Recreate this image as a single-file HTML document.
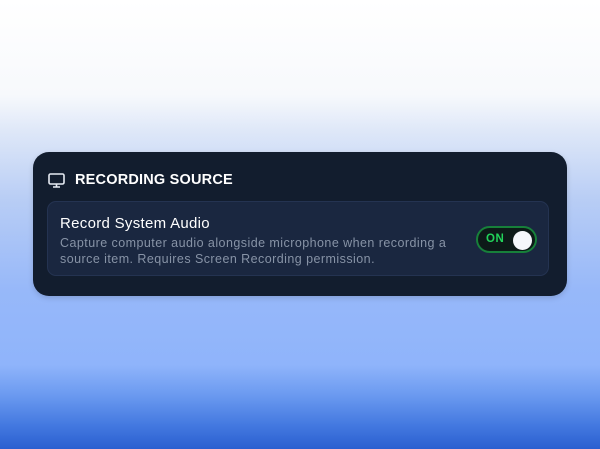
<!DOCTYPE html>
<html><head><style>
html,body{margin:0;width:600px;height:449px;overflow:hidden}
body{background:linear-gradient(to bottom,#ffffff 0px,#f7f9fc 95px,#dfe8f8 130px,#b8cdf5 200px,#97b8f9 290px,#8fb4fb 365px,#6b9af0 395px,#4479e0 425px,#2a5fd0 449px);font-family:"Liberation Sans",sans-serif;position:relative}
.card{position:absolute;left:33px;top:152px;width:534px;height:144px;background:#121d2e;border-radius:16px;box-shadow:0 2px 6px rgba(0,0,0,.15)}
.hd{position:absolute;left:15px;top:20px;display:flex;align-items:center;color:#fff;font-weight:bold;font-size:14.5px;letter-spacing:.2px}
.hd svg{margin-right:10px}
.box{position:absolute;left:14px;top:49px;width:502px;height:75px;background:#1a2740;border:1px solid #243351;border-radius:9px;box-sizing:border-box}
.t{position:absolute;left:12px;top:13px;color:#fff;font-size:15px;letter-spacing:.3px}
.d{position:absolute;left:12px;top:33px;color:#8793a6;font-size:12.5px;line-height:16px;width:420px;letter-spacing:.45px}
.tg{position:absolute;left:428px;top:24px;width:61px;height:27px;box-sizing:border-box;border:2px solid #17803a;border-radius:14px;background:#0d1a18}
.tg span{position:absolute;left:8px;top:5px;color:#22d35a;font-weight:bold;font-size:11.5px;letter-spacing:.6px}
.tg i{position:absolute;right:3px;top:2.5px;width:19px;height:19px;border-radius:50%;background:#f5f7fb}
</style></head><body>
<div class="card">
<div class="hd"><svg width="17" height="15" viewBox="0 0 17 15" fill="none" stroke="#e6ebf3" stroke-width="1.6"><rect x="1" y="1" width="15" height="10" rx="1.5"/><path d="M8.5 11v3M5 14h7"/></svg>RECORDING SOURCE</div>
<div class="box">
<div class="t">Record System Audio</div>
<div class="d">Capture computer audio alongside microphone when recording a source item. Requires Screen Recording permission.</div>
<div class="tg"><span>ON</span><i></i></div>
</div>
</div>
</body></html>
